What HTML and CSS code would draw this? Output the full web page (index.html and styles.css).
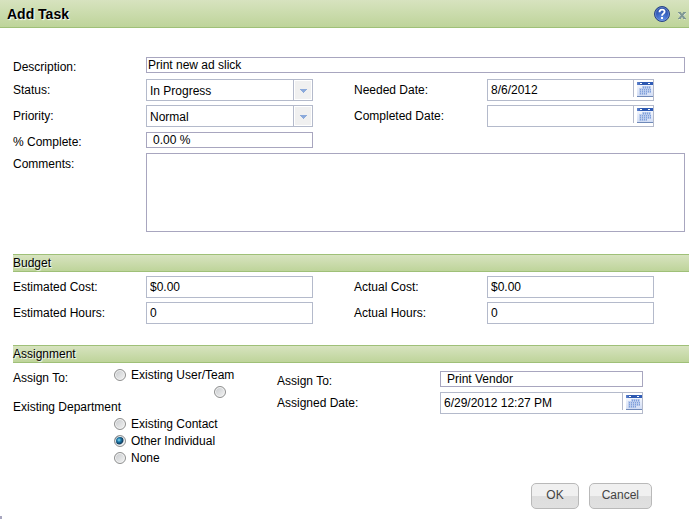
FILE: index.html
```html
<!DOCTYPE html>
<html lang="en">
<head>
<meta charset="utf-8">
<title>Add Task</title>
<link rel="stylesheet" href="styles.css">
</head>
<body>
<svg class="defs" aria-hidden="true">
  <defs>
    <linearGradient id="cal-head" x1="0" y1="0" x2="1" y2="0"><stop offset="0" stop-color="#6286cf"/><stop offset=".3" stop-color="#2c57ae"/><stop offset="1" stop-color="#2f5cb8"/></linearGradient>
    <linearGradient id="cal-body" x1="0" y1="0" x2="0" y2="1"><stop offset="0" stop-color="#fbfcff"/><stop offset="1" stop-color="#cfdbf4"/></linearGradient>
    <radialGradient id="help-fill" cx=".5" cy=".85" r=".8"><stop offset="0" stop-color="#5f8fe6"/><stop offset=".6" stop-color="#3560bd"/><stop offset="1" stop-color="#27479b"/></radialGradient>
    <symbol id="calendar" viewBox="0 0 16 15">
      <rect width="16" height="15" fill="url(#cal-body)"/>
      <rect width="16" height="3" fill="url(#cal-head)"/>
      <path d="M3 1h2v1H3zM11 1h2v1h-2z" fill="#fff"/>
      <path d="M5 4h9v7h-4v2H2V6h3z" fill="#c0d0ee"/>
      <g stroke="#7f9fdc" stroke-dasharray="1 1" fill="none"><path d="M6 5.500h8M3 7.500h11M3 9.500h11M3 11.500h7"/></g>
      <g stroke="#a3bbe6" stroke-dasharray="1 1" fill="none"><path d="M6 4.500h8M6 6.500h8M3 8.500h11M3 10.500h11M3 12.500h7"/></g>
      <rect y="14" width="16" height="1" fill="#6f89b8"/>
    </symbol>
  </defs>
</svg>
<form class="dialog">
  <header class="titlebar">
    <h1>Add Task</h1>
    <button type="button" class="icon-btn" aria-label="Help">
      <svg width="16" height="16" viewBox="0 0 16 16"><circle cx="8" cy="8" r="7.500" fill="url(#help-fill)" stroke="#294585"/><circle cx="8" cy="8" r="6.500" fill="none" stroke="#86a5e2" stroke-width=".6"/><path d="M5.500 6.200C5.500 4.300 6.600 3.600 8 3.600s2.600.8 2.600 2.200C10.600 7.600 8 7.700 8 9.700" fill="none" stroke="#fff" stroke-width="1.800"/><rect x="7" y="11" width="2" height="2" fill="#fff"/></svg>
    </button>
    <button type="button" class="icon-btn close" aria-label="Close">
      <svg width="8" height="9" viewBox="0 0 8 9"><path d="M1 2l6 6M7 2L1 8" stroke="#fff" stroke-width="2"/><path d="M0 1.500h3M5 1.500h3M0 7.500h3M5 7.500h3" stroke="#7f9893"/><path d="M1.500 1.500l5 6M6.500 1.500l-5 6" stroke="#7f9893" stroke-width="2"/></svg>
    </button>
  </header>

  <section class="details">
    <div class="field short">
      <label for="description">Description:</label>
      <input id="description" class="box" value="Print new ad slick">
    </div>
    <div class="pair">
      <div class="field">
        <label for="status">Status:</label>
        <span class="box combo"><select id="status"><option>In Progress</option></select><svg viewBox="0 0 18 20" width="18" height="20"><path d="M1 1h16v18H1z" fill="#f0f0f0"/><path d="M6 9h7v1h-1v1h-1v1h-1v1H9v-1H8v-1H7v-1H6z" fill="#8caadb"/></svg></span>
      </div>
      <div class="field">
        <label for="needed">Needed Date:</label>
        <span class="box date"><input id="needed" value="8/6/2012"><button type="button" aria-label="Choose needed date"><svg width="16" height="15"><use href="#calendar"/></svg></button></span>
      </div>
      <div class="field">
        <label for="priority">Priority:</label>
        <span class="box combo"><select id="priority"><option>Normal</option></select><svg viewBox="0 0 18 20" width="18" height="20"><path d="M1 1h16v18H1z" fill="#f0f0f0"/><path d="M6 9h7v1h-1v1h-1v1h-1v1H9v-1H8v-1H7v-1H6z" fill="#8caadb"/></svg></span>
      </div>
      <div class="field">
        <label for="completed">Completed Date:</label>
        <span class="box date"><input id="completed"><button type="button" aria-label="Choose completed date"><svg width="16" height="15"><use href="#calendar"/></svg></button></span>
      </div>
    </div>
    <div class="pair">
      <div class="field short indented">
        <label for="percent">% Complete:</label>
        <input id="percent" class="box" value="0.00 %">
      </div>
    </div>
    <div class="field">
      <label for="comments">Comments:</label>
      <textarea id="comments" class="box"></textarea>
    </div>
  </section>

  <section class="budget">
    <h2>Budget</h2>
    <div class="pair">
      <div class="field"><label for="est-cost">Estimated Cost:</label><input id="est-cost" class="box" value="$0.00"></div>
      <div class="field"><label for="act-cost">Actual Cost:</label><input id="act-cost" class="box" value="$0.00"></div>
      <div class="field"><label for="est-hours">Estimated Hours:</label><input id="est-hours" class="box" value="0"></div>
      <div class="field"><label for="act-hours">Actual Hours:</label><input id="act-hours" class="box" value="0"></div>
    </div>
  </section>

  <section class="assignment">
    <h2>Assignment</h2>
    <div class="assign">
      <div class="choices" role="radiogroup" aria-labelledby="assign-label">
        <span id="assign-label">Assign To:</span>
        <label><input type="radio" name="assign">Existing User/Team</label>
        <label class="wrapped"><input type="radio" name="assign">Existing Department</label>
        <label><input type="radio" name="assign">Existing Contact</label>
        <label><input type="radio" name="assign" checked>Other Individual</label>
        <label><input type="radio" name="assign">None</label>
      </div>
      <div class="assignee">
        <div class="field short indented">
          <label for="assign-to">Assign To:</label>
          <input id="assign-to" class="box" value="Print Vendor" autofocus>
        </div>
        <div class="field">
          <label for="assigned">Assigned Date:</label>
          <span class="box date"><input id="assigned" value="6/29/2012 12:27 PM"><button type="button" aria-label="Choose assigned date"><svg width="16" height="15"><use href="#calendar"/></svg></button></span>
        </div>
      </div>
    </div>
  </section>

  <footer class="actions">
    <button type="submit">OK</button>
    <button type="button">Cancel</button>
  </footer>
  <div class="resize-mark"></div>
</form>
<script src="focus.js"></script>
</body>
</html>
```
FILE: styles.css
```css
* { box-sizing: border-box; }

body {
  margin: 0;
  background: #fff;
  color: #000;
  font: 12px/16px "Liberation Sans", Arial, sans-serif;
}

input, select, textarea, button { font: inherit; color: inherit; }

.defs { position: absolute; width: 0; height: 0; }

.titlebar {
  display: flex;
  align-items: center;
  gap: 8px;
  height: 28px;
  padding: 0 3px 0 7px;
  background: linear-gradient(#d7e3bf, #bed49a);
  border-bottom: 1px solid #9fc078;
}

h1 {
  flex: 1;
  margin: 0;
  font-size: 14px;
  text-shadow: 1px 1px 1px #fff;
}

.icon-btn {
  display: flex;
  padding: 0;
  border: 0;
  background: none;
}

.icon-btn.close { padding-top: 3px; }

.details { padding: 29px 4px 0 13px; }

.field {
  display: grid;
  grid-template-columns: 133px 1fr;
  align-items: start;
  line-height: 22px;
}

.pair {
  display: grid;
  grid-template-columns: 1fr 1fr;
  gap: 4px 41px;
  margin-right: 31px;
}

.box {
  display: block;
  width: 100%;
  min-width: 0;
  height: 22px;
  margin: 0;
  padding: 0 3px;
  background: #fff;
  border: 1px solid #b4bacb;
  border-radius: 0;
  outline: 0;
}

.short { line-height: 20px; }
.short .box { height: 16px; padding: 0 1px; border-color: #a8a6bf; line-height: 14px; }
.short.indented .box { padding: 0 6px; }
.details > .short { margin-bottom: 2px; }
.details > .pair + .pair { margin-top: 5px; margin-bottom: 1px; }

textarea.box { height: 79px; border-color: #a8a6bf; resize: none; }

.combo, .date { display: flex; padding: 0; }

.combo select, .date input {
  flex: 1;
  min-width: 0;
  height: 20px;
  padding: 0 3px;
  border: 0;
  outline: 0;
  background: none;
  appearance: none;
}

.combo select { padding-bottom: 2px; }

.combo svg { border-left: 1px solid #b4bacb; width: 19px; pointer-events: none; }

.date button {
  width: 20px;
  height: 17px;
  padding: 2px 0 0 3px;
  border: 0;
  border-left: 1px solid #b4bacb;
  background: #fff;
}

.date svg { display: block; }

h2 {
  height: 18px;
  margin: 0 0 4px 13px;
  background: linear-gradient(#d7e3bf, #bed49a);
  border: solid #9fc078;
  border-width: 1px 0;
  font-size: 12px;
  font-weight: normal;
  line-height: 16px;
  text-shadow: 1px 1px 1px #fff;
}

.budget { padding-top: 22px; }
.budget .pair { margin: 0 35px 0 13px; }

.assignment { padding-top: 21px; }

.assign {
  display: grid;
  grid-template-columns: 264px 1fr;
  padding: 0 46px 0 13px;
}

.choices {
  display: grid;
  grid-template-columns: 101px 1fr;
  align-content: start;
  line-height: 17px;
}

.choices > span { height: 17px; padding-top: 3px; }
.choices > label { grid-column: 2; display: flex; gap: 5px; }
.choices > span + label { grid-row: 1; }

.choices > .wrapped {
  grid-column: 1 / -1;
  flex-direction: column;
  gap: 0;
}

input[type="radio"] {
  appearance: none;
  flex: none;
  width: 12px;
  height: 12px;
  margin: 2px 0 1px;
  border: 1px solid #8e8f8f;
  border-radius: 50%;
  background: linear-gradient(135deg, #c6c9cc, #f4f4f4);
  box-shadow: inset 0 0 0 1px #f4f4f4;
}

.wrapped input[type="radio"] { margin-left: 201px; }

input[type="radio"]:checked {
  background: radial-gradient(circle at 4px 4px, #8fe0f8 0, #1b78a8 2px, #123a5c 4px, #e4e8ea 5px);
}

.assignee { padding-top: 4px; }
.assignee .field { grid-template-columns: 163px 1fr; }
.assignee .short { margin-bottom: 1px; }

.actions {
  display: flex;
  justify-content: flex-end;
  gap: 10px;
  padding: 16px 37px 7px;
}

.actions button {
  height: 26px;
  padding: 0 12px 2px;
  border: 1px solid #b9b9b9;
  border-radius: 5px;
  background: linear-gradient(#f0f0f0 50%, #dedede 50%, #e0e0e0);
  color: #444;
}

.actions button:first-child { padding: 0 14px 2px; }

.resize-mark { width: 2px; height: 3px; background: #a8a6bf; }
```
FILE: focus.js
```js
const assignee = document.getElementById("assign-to");
assignee.focus();
assignee.setSelectionRange(assignee.value.length, assignee.value.length);
```
